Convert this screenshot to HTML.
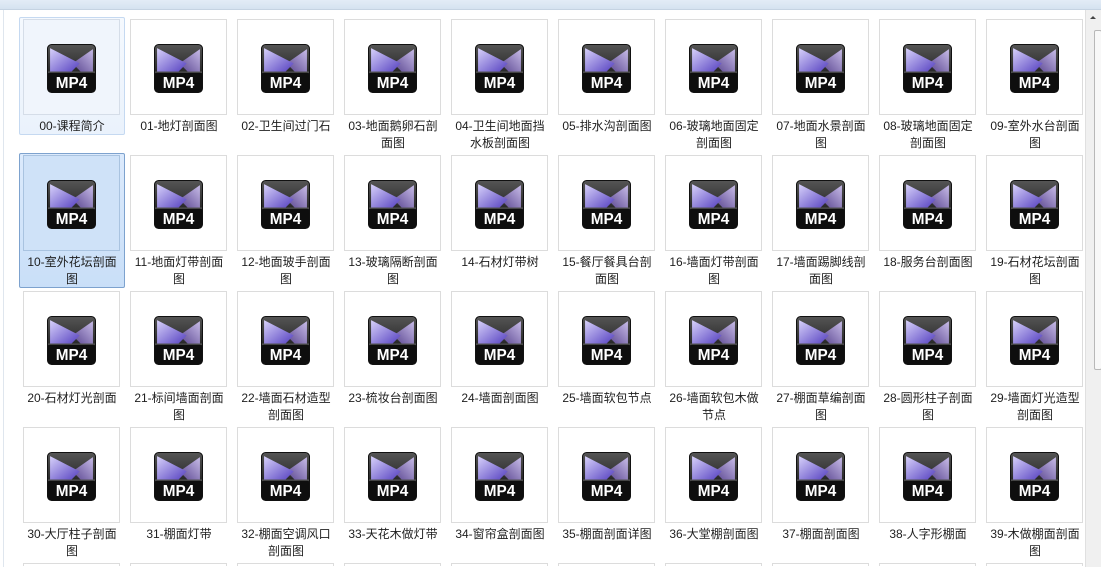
<!DOCTYPE html>
<html><head><meta charset="utf-8"><style>
*{margin:0;padding:0;box-sizing:border-box}
html,body{width:1101px;height:567px;overflow:hidden}
body{background:#fff;position:relative;font-family:"Liberation Sans","Noto Sans CJK SC",sans-serif;font-size:12px;color:#1e1e1e}
.top{position:absolute;left:0;top:0;width:1101px;height:10px;background:linear-gradient(#e3ecf6,#d5e2f0);border-bottom:1px solid #c5d3e2}
.lb{position:absolute;left:3px;top:10px;width:1px;height:557px;background:#dfe6ee}
.it{position:absolute;width:106px;height:118px;border:1px solid transparent;border-radius:2px}
.it.h{background:linear-gradient(#f5f9fe,#eaf2fc);border-color:#c5d9f1}
.it.s{background:linear-gradient(#dceafc,#c9dff8);border-color:#7da2ce;height:135px}
.th{position:absolute;left:3px;top:1px;width:97px;height:96px;border:1px solid #dcdcdc;background:#fff}
.it.h .th{background:#f0f5fc;border-color:#d5dde8}
.it.s .th{background:#cfe2f8;border-color:#a9c3e0}
.th svg{position:absolute;left:23px;top:24px;width:49px;height:49px}
.lab{position:absolute;left:-10px;top:100px;width:124px;text-align:center;line-height:17px;font-size:12px;white-space:nowrap}
.it.b{height:6px;overflow:hidden}
.it.b .th{height:5px;border-bottom:none}
.sb{position:absolute;left:1085px;top:10px;width:16px;height:557px;background:#f0f0f0;border-left:1px solid #e0e0e0}
.sb .th2{position:absolute;left:8px;top:20px;width:8px;height:340px;background:#f8f8f8;border:1px solid #b8b8b8;border-radius:2px}
.sb .ar{position:absolute;left:4px;top:6px;width:0;height:0;border-left:3px solid transparent;border-right:3px solid transparent;border-bottom:3px solid #444}
</style></head><body>
<svg width="0" height="0" style="position:absolute"><defs>
<linearGradient id="bg" x1="0" y1="0" x2="0" y2="1"><stop offset="0" stop-color="#555"/><stop offset="0.55" stop-color="#2a2a2a"/><stop offset="1" stop-color="#111"/></linearGradient>
<linearGradient id="pl" x1="0" y1="0" x2="1" y2="1"><stop offset="0" stop-color="#d8d2fa"/><stop offset="1" stop-color="#5540c0"/></linearGradient>
<linearGradient id="pr" x1="1" y1="0" x2="0" y2="1"><stop offset="0" stop-color="#c8bce8"/><stop offset="1" stop-color="#5a4690"/></linearGradient>
<symbol id="i" viewBox="0 0 48 48">
<rect x="0.5" y="0.5" width="47" height="47" rx="4" fill="url(#bg)" stroke="#111"/>
<path d="M45 5 L25 19 L33 27 L45 27 Z" fill="url(#pr)"/>
<path d="M3 4 L32 19 L24 27 L3 27 Z" fill="url(#pl)"/>
<rect x="1" y="27" width="46" height="20" rx="3" fill="#0e0e0e"/>
<line x1="1" y1="27.5" x2="47" y2="27.5" stroke="#666"/>
<text x="24" y="43" text-anchor="middle" font-family="Liberation Sans,sans-serif" font-weight="bold" font-size="15" fill="#fff">MP4</text>
</symbol></defs></svg>
<div class="top"></div><div class="lb"></div>

<div class="it h" style="left:19px;top:17px"><div class="th"><svg><use href="#i"/></svg></div><div class="lab">00-课程简介</div></div>
<div class="it" style="left:126px;top:17px"><div class="th"><svg><use href="#i"/></svg></div><div class="lab">01-地灯剖面图</div></div>
<div class="it" style="left:233px;top:17px"><div class="th"><svg><use href="#i"/></svg></div><div class="lab">02-卫生间过门石</div></div>
<div class="it" style="left:340px;top:17px"><div class="th"><svg><use href="#i"/></svg></div><div class="lab">03-地面鹅卵石剖<br>面图</div></div>
<div class="it" style="left:447px;top:17px"><div class="th"><svg><use href="#i"/></svg></div><div class="lab">04-卫生间地面挡<br>水板剖面图</div></div>
<div class="it" style="left:554px;top:17px"><div class="th"><svg><use href="#i"/></svg></div><div class="lab">05-排水沟剖面图</div></div>
<div class="it" style="left:661px;top:17px"><div class="th"><svg><use href="#i"/></svg></div><div class="lab">06-玻璃地面固定<br>剖面图</div></div>
<div class="it" style="left:768px;top:17px"><div class="th"><svg><use href="#i"/></svg></div><div class="lab">07-地面水景剖面<br>图</div></div>
<div class="it" style="left:875px;top:17px"><div class="th"><svg><use href="#i"/></svg></div><div class="lab">08-玻璃地面固定<br>剖面图</div></div>
<div class="it" style="left:982px;top:17px"><div class="th"><svg><use href="#i"/></svg></div><div class="lab">09-室外水台剖面<br>图</div></div>

<div class="it s" style="left:19px;top:153px"><div class="th"><svg><use href="#i"/></svg></div><div class="lab">10-室外花坛剖面<br>图</div></div>
<div class="it" style="left:126px;top:153px"><div class="th"><svg><use href="#i"/></svg></div><div class="lab">11-地面灯带剖面<br>图</div></div>
<div class="it" style="left:233px;top:153px"><div class="th"><svg><use href="#i"/></svg></div><div class="lab">12-地面玻手剖面<br>图</div></div>
<div class="it" style="left:340px;top:153px"><div class="th"><svg><use href="#i"/></svg></div><div class="lab">13-玻璃隔断剖面<br>图</div></div>
<div class="it" style="left:447px;top:153px"><div class="th"><svg><use href="#i"/></svg></div><div class="lab">14-石材灯带树</div></div>
<div class="it" style="left:554px;top:153px"><div class="th"><svg><use href="#i"/></svg></div><div class="lab">15-餐厅餐具台剖<br>面图</div></div>
<div class="it" style="left:661px;top:153px"><div class="th"><svg><use href="#i"/></svg></div><div class="lab">16-墙面灯带剖面<br>图</div></div>
<div class="it" style="left:768px;top:153px"><div class="th"><svg><use href="#i"/></svg></div><div class="lab">17-墙面踢脚线剖<br>面图</div></div>
<div class="it" style="left:875px;top:153px"><div class="th"><svg><use href="#i"/></svg></div><div class="lab">18-服务台剖面图</div></div>
<div class="it" style="left:982px;top:153px"><div class="th"><svg><use href="#i"/></svg></div><div class="lab">19-石材花坛剖面<br>图</div></div>

<div class="it" style="left:19px;top:289px"><div class="th"><svg><use href="#i"/></svg></div><div class="lab">20-石材灯光剖面</div></div>
<div class="it" style="left:126px;top:289px"><div class="th"><svg><use href="#i"/></svg></div><div class="lab">21-标间墙面剖面<br>图</div></div>
<div class="it" style="left:233px;top:289px"><div class="th"><svg><use href="#i"/></svg></div><div class="lab">22-墙面石材造型<br>剖面图</div></div>
<div class="it" style="left:340px;top:289px"><div class="th"><svg><use href="#i"/></svg></div><div class="lab">23-梳妆台剖面图</div></div>
<div class="it" style="left:447px;top:289px"><div class="th"><svg><use href="#i"/></svg></div><div class="lab">24-墙面剖面图</div></div>
<div class="it" style="left:554px;top:289px"><div class="th"><svg><use href="#i"/></svg></div><div class="lab">25-墙面软包节点</div></div>
<div class="it" style="left:661px;top:289px"><div class="th"><svg><use href="#i"/></svg></div><div class="lab">26-墙面软包木做<br>节点</div></div>
<div class="it" style="left:768px;top:289px"><div class="th"><svg><use href="#i"/></svg></div><div class="lab">27-棚面草编剖面<br>图</div></div>
<div class="it" style="left:875px;top:289px"><div class="th"><svg><use href="#i"/></svg></div><div class="lab">28-圆形柱子剖面<br>图</div></div>
<div class="it" style="left:982px;top:289px"><div class="th"><svg><use href="#i"/></svg></div><div class="lab">29-墙面灯光造型<br>剖面图</div></div>

<div class="it" style="left:19px;top:425px"><div class="th"><svg><use href="#i"/></svg></div><div class="lab">30-大厅柱子剖面<br>图</div></div>
<div class="it" style="left:126px;top:425px"><div class="th"><svg><use href="#i"/></svg></div><div class="lab">31-棚面灯带</div></div>
<div class="it" style="left:233px;top:425px"><div class="th"><svg><use href="#i"/></svg></div><div class="lab">32-棚面空调风口<br>剖面图</div></div>
<div class="it" style="left:340px;top:425px"><div class="th"><svg><use href="#i"/></svg></div><div class="lab">33-天花木做灯带</div></div>
<div class="it" style="left:447px;top:425px"><div class="th"><svg><use href="#i"/></svg></div><div class="lab">34-窗帘盒剖面图</div></div>
<div class="it" style="left:554px;top:425px"><div class="th"><svg><use href="#i"/></svg></div><div class="lab">35-棚面剖面详图</div></div>
<div class="it" style="left:661px;top:425px"><div class="th"><svg><use href="#i"/></svg></div><div class="lab">36-大堂棚剖面图</div></div>
<div class="it" style="left:768px;top:425px"><div class="th"><svg><use href="#i"/></svg></div><div class="lab">37-棚面剖面图</div></div>
<div class="it" style="left:875px;top:425px"><div class="th"><svg><use href="#i"/></svg></div><div class="lab">38-人字形棚面</div></div>
<div class="it" style="left:982px;top:425px"><div class="th"><svg><use href="#i"/></svg></div><div class="lab">39-木做棚面剖面<br>图</div></div>

<div class="it b" style="left:19px;top:561px"><div class="th"></div></div>
<div class="it b" style="left:126px;top:561px"><div class="th"></div></div>
<div class="it b" style="left:233px;top:561px"><div class="th"></div></div>
<div class="it b" style="left:340px;top:561px"><div class="th"></div></div>
<div class="it b" style="left:447px;top:561px"><div class="th"></div></div>
<div class="it b" style="left:554px;top:561px"><div class="th"></div></div>
<div class="it b" style="left:661px;top:561px"><div class="th"></div></div>
<div class="it b" style="left:768px;top:561px"><div class="th"></div></div>
<div class="it b" style="left:875px;top:561px"><div class="th"></div></div>
<div class="it b" style="left:982px;top:561px"><div class="th"></div></div>

<div class="sb"><div class="ar"></div><div class="th2"></div></div>
</body></html>
